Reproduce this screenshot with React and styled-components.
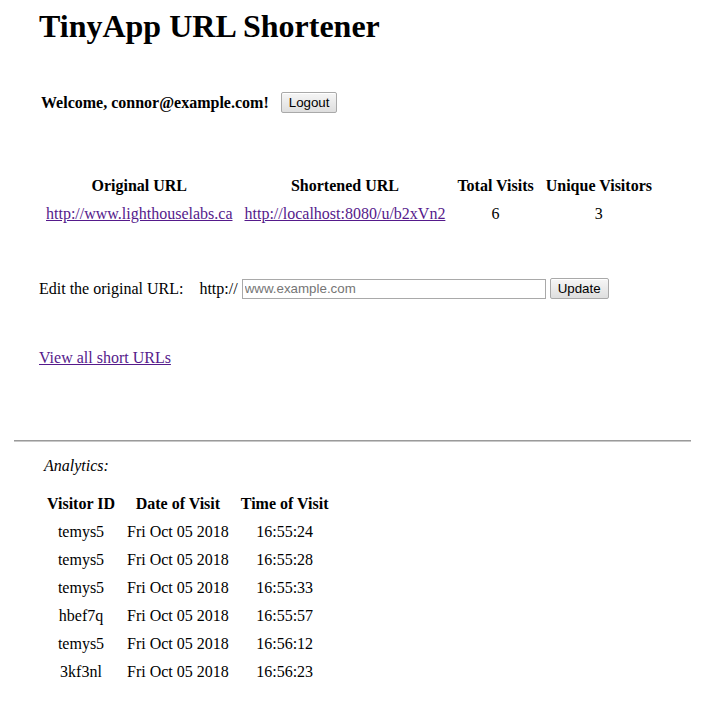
import React from 'react';
import styled, { createGlobalStyle } from 'styled-components';

const GlobalStyle = createGlobalStyle`
  html, body {
    margin: 0;
    padding: 0;
    background: #fff;
    color: #000;
    font-family: "Liberation Serif", "Times New Roman", serif;
    font-size: 16px;
  }
`;

const Page = styled.div`
  padding: 0 0 24px;
`;

const Section = styled.div`
  padding-left: ${props => props.indent || 39}px;
`;

const Title = styled.h1`
  font-size: 32px;
  font-weight: bold;
  margin: 8px 0 0;
  line-height: 37px;
`;

const WelcomeRow = styled.div`
  display: flex;
  align-items: center;
  gap: 12px;
  margin-top: 47px;
  padding-left: 2px;
`;

const Welcome = styled.span`
  font-weight: bold;
`;

const Button = styled.button`
  font-family: "Liberation Sans", Arial, sans-serif;
  font-size: 13.33px;
  color: #000;
  height: 21px;
  padding: 0 7px;
  border: 1px solid #a9a9a9;
  border-radius: 2px;
  background: linear-gradient(to bottom, #f6f6f6, #dedede);
  box-shadow: inset 0 1px 0 #fff;
`;

const Table = styled.table`
  border-collapse: separate;
  border-spacing: 2px;
  margin-top: ${props => props.top || 0}px;
  text-align: center;

  th {
    font-weight: bold;
    padding: 4px 5px;
    line-height: 18px;
  }
  td {
    padding: 4px 5px;
    line-height: 18px;
  }
`;

const Link = styled.a`
  color: #551a8b;
  text-decoration: underline;
`;

const EditForm = styled.form`
  display: flex;
  align-items: center;
  margin-top: 49px;
`;

const Label = styled.span`
  margin-right: 16px;
`;

const Prefix = styled.span`
  margin-right: 4px;
`;

const Input = styled.input`
  width: 304px;
  height: 20px;
  box-sizing: border-box;
  border: 1px solid #a9a9a9;
  padding: 0 2px;
  font-family: "Liberation Sans", Arial, sans-serif;
  font-size: 13.33px;
  margin-right: 4px;
  &::placeholder {
    color: #757575;
  }
`;

const AllLink = styled(Link)`
  display: inline-block;
  margin-top: 50px;
`;

const Rule = styled.hr`
  margin: 73px 21px 0 14px;
  border: none;
  border-top: 1px solid #9a9a9a;
  border-bottom: 1px solid #c8c8c8;
  height: 0;
`;

const Caption = styled.p`
  font-style: italic;
  margin: 15px 0 0;
`;

const visits = [
  ['temys5', 'Fri Oct 05 2018', '16:55:24'],
  ['temys5', 'Fri Oct 05 2018', '16:55:28'],
  ['temys5', 'Fri Oct 05 2018', '16:55:33'],
  ['hbef7q', 'Fri Oct 05 2018', '16:55:57'],
  ['temys5', 'Fri Oct 05 2018', '16:56:12'],
  ['3kf3nl', 'Fri Oct 05 2018', '16:56:23'],
];

export default function App() {
  return (
    <Page>
      <GlobalStyle />
      <Section>
        <Title>TinyApp URL Shortener</Title>
        <WelcomeRow>
          <Welcome>Welcome, connor@example.com!</Welcome>
          <Button type="button">Logout</Button>
        </WelcomeRow>
        <Table top={58}>
          <thead>
            <tr>
              <th>Original URL</th>
              <th>Shortened URL</th>
              <th>Total Visits</th>
              <th>Unique Visitors</th>
            </tr>
          </thead>
          <tbody>
            <tr>
              <td><Link href="#">http://www.lighthouselabs.ca</Link></td>
              <td><Link href="#">http://localhost:8080/u/b2xVn2</Link></td>
              <td>6</td>
              <td>3</td>
            </tr>
          </tbody>
        </Table>
        <EditForm onSubmit={e => e.preventDefault()}>
          <Label>Edit the original URL:</Label>
          <Prefix>http://</Prefix>
          <Input placeholder="www.example.com" />
          <Button type="submit">Update</Button>
        </EditForm>
        <AllLink href="#">View all short URLs</AllLink>
      </Section>
      <Rule />
      <Section indent={44}>
        <Caption>Analytics:</Caption>
      </Section>
      <Section indent={40}>
        <Table top={14}>
          <thead>
            <tr>
              <th>Visitor ID</th>
              <th>Date of Visit</th>
              <th>Time of Visit</th>
            </tr>
          </thead>
          <tbody>
            {visits.map((v, i) => (
              <tr key={i}>
                <td>{v[0]}</td>
                <td>{v[1]}</td>
                <td>{v[2]}</td>
              </tr>
            ))}
          </tbody>
        </Table>
      </Section>
    </Page>
  );
}
